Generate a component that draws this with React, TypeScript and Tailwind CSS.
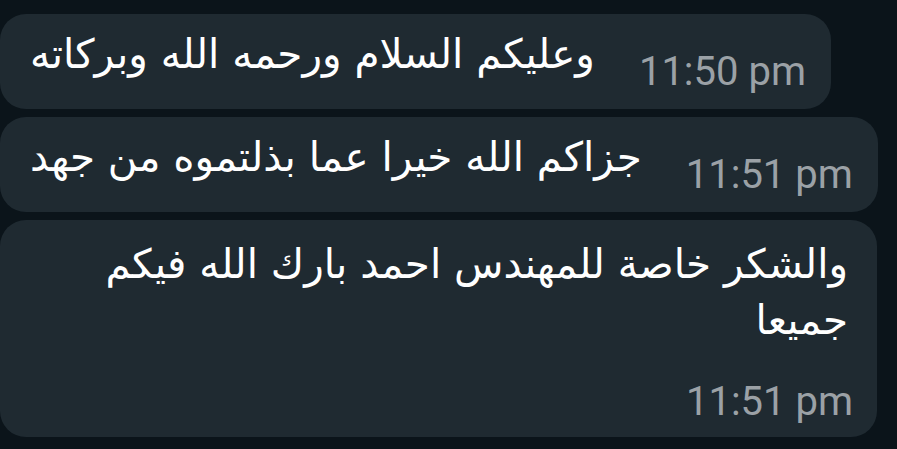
type Message = {
  text: string[];
  time: string;
  stacked?: boolean;
};

const messages: Message[] = [
  { text: ["وعليكم السلام ورحمه الله وبركاته"], time: "11:50 pm" },
  { text: ["جزاكم الله خيرا عما بذلتموه من جهد"], time: "11:51 pm" },
  {
    text: ["والشكر خاصة للمهندس احمد بارك الله فيكم", "جميعا"],
    time: "11:51 pm",
    stacked: true,
  },
];

function Time({ value }: { value: string }) {
  return (
    <span className="whitespace-nowrap font-['Roboto',sans-serif] text-[40px] leading-none text-[#9ba1a6]">
      {value}
    </span>
  );
}

function Bubble({ message }: { message: Message }) {
  if (message.stacked) {
    return (
      <div className="flex w-[877px] flex-col items-end rounded-[26px] bg-[#1f2a31] pb-[15px] pl-[30px] pr-[24px] pt-[16px]">
        <div
          dir="rtl"
          className="pr-[5px] text-right font-['DejaVu_Sans',sans-serif] text-[40.5px] leading-[56px] text-white"
        >
          {message.text.map((line) => (
            <div key={line}>{line}</div>
          ))}
        </div>
        <div className="mt-[34px]">
          <Time value={message.time} />
        </div>
      </div>
    );
  }

  return (
    <div className="flex h-[95px] items-end gap-[44px] rounded-[26px] bg-[#1f2a31] pb-[17px] pl-[30px] pr-[25px]">
      <div
        dir="rtl"
        className="mb-[10px] whitespace-nowrap font-['DejaVu_Sans',sans-serif] text-[40.5px] leading-[55px] text-white"
      >
        {message.text[0]}
      </div>
      <Time value={message.time} />
    </div>
  );
}

export default function App() {
  return (
    <div className="flex min-h-screen flex-col items-start gap-2 bg-[#0b141a] pt-[14px]">
      {messages.map((message, index) => (
        <Bubble key={index} message={message} />
      ))}
    </div>
  );
}
